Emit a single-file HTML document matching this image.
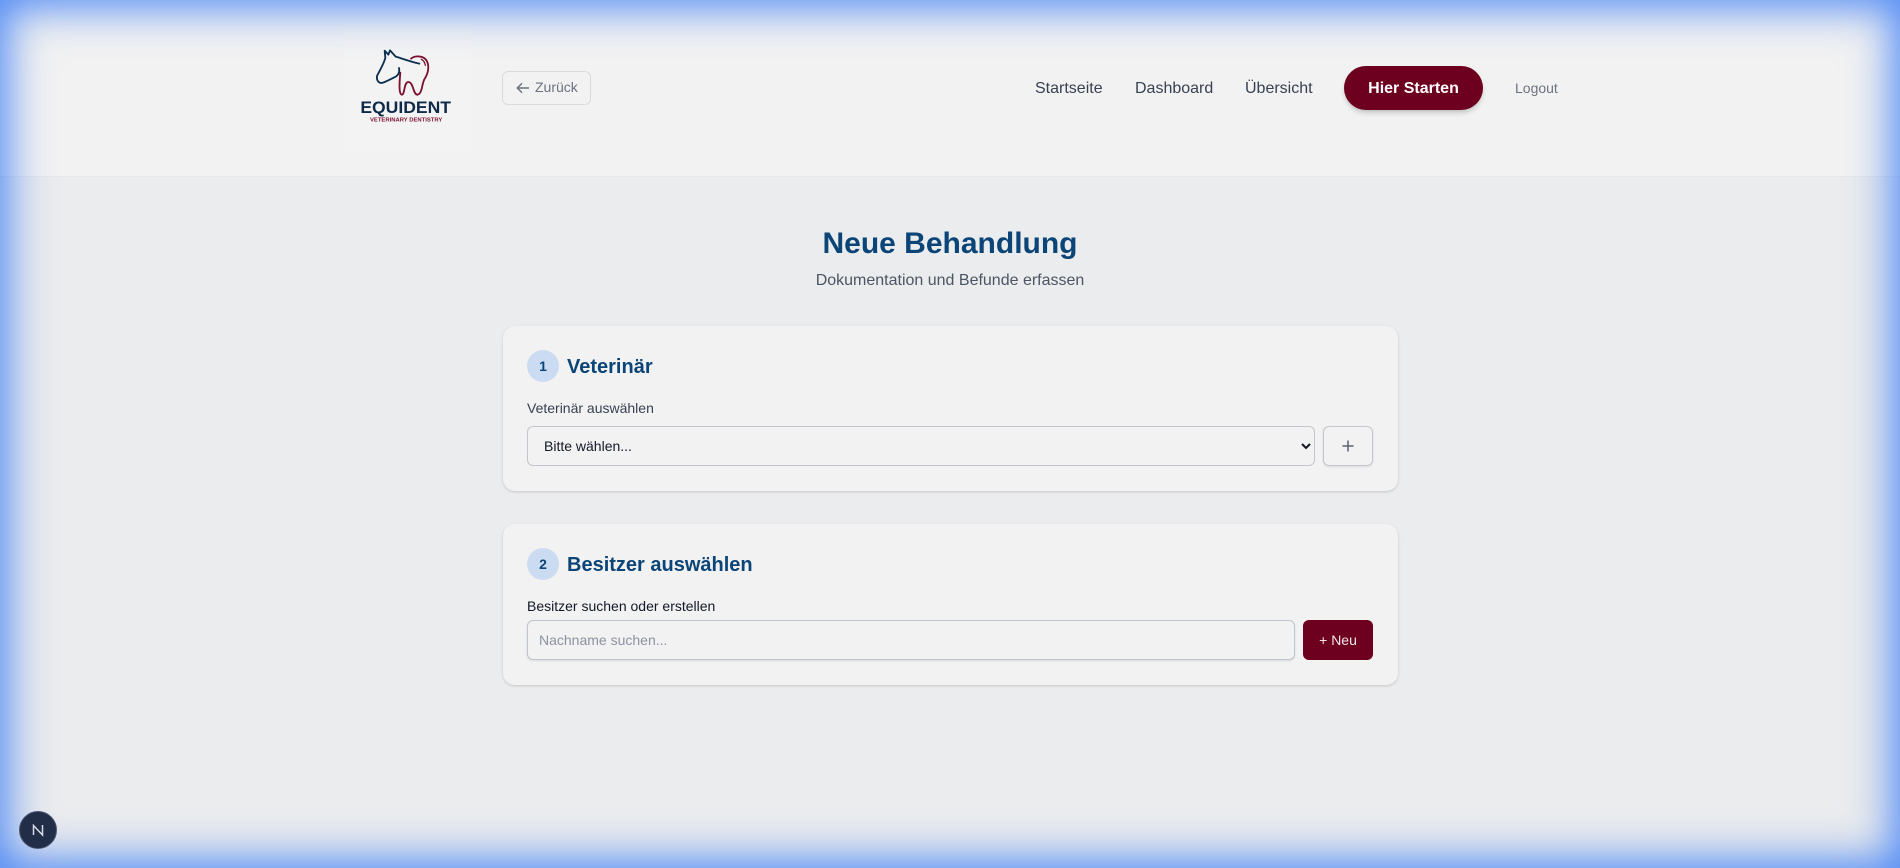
<!DOCTYPE html>
<html lang="de"><head><meta charset="utf-8"><title>Neue Behandlung</title>
<style>
*{box-sizing:border-box;margin:0;padding:0}
html,body{width:1900px;height:868px;overflow:hidden}
body{background:#ebecee;font-family:"Liberation Sans",sans-serif;position:relative;color:#111827}
.abs{position:absolute}
header{position:absolute;left:0;top:0;width:1900px;height:177px;background:#f2f2f2;border-bottom:1px solid #e5e6e9}
.logo{position:absolute;left:343px;top:24px;width:128px;height:128px;background:#f3f3f3}
.back{position:absolute;left:502px;top:71px;width:89px;height:34px;border:1px solid #d8dade;border-radius:6px;font-size:14px;line-height:31px;color:#6b7280;padding-left:32px}
.nav{position:absolute;top:79px;font-size:16px;line-height:20px;color:#374151}
.cta{position:absolute;left:1344px;top:66px;width:139px;height:44px;border-radius:22px;background:#6d001f;color:#fff;font-weight:700;font-size:16px;line-height:45px;text-align:center;box-shadow:0 4px 6px -1px rgba(0,0,0,.16),0 2px 4px -2px rgba(0,0,0,.12)}
h1{position:absolute;left:0;width:1900px;top:226px;text-align:center;font-size:30px;line-height:36px;color:#0b4477;font-weight:700}
.sub{position:absolute;left:0;width:1900px;top:269px;text-align:center;font-size:16px;line-height:24px;color:#4b5563}
.card{position:absolute;left:503px;width:894.5px;background:#f2f2f2;border-radius:12px;box-shadow:0 1px 3px rgba(0,0,0,.1),0 1px 2px rgba(0,0,0,.06)}
.num{position:absolute;left:24px;width:32px;height:32px;border-radius:50%;background:#cbdcf2;color:#0b4477;font-weight:700;font-size:14px;line-height:32px;text-align:center}
h2{position:absolute;left:64px;font-size:20px;line-height:28px;font-weight:700;color:#0b4477}
label{position:absolute;left:24px;font-size:14px;line-height:20px}
select,input{font-family:"Liberation Sans",sans-serif;font-size:14px;outline:0}
select{position:absolute;left:24px;top:100px;width:788px;height:40px;border:1px solid #c3c6cc;border-radius:6px;background:#f2f2f2;padding:0 12px;color:#111827}
input{position:absolute;left:24px;top:96px;width:768px;height:40px;border:1px solid #bfc5cf;border-radius:6px;background:#f2f2f2;padding:0 11px;box-shadow:0 1px 2px rgba(0,0,0,.1)}
input::placeholder{color:#8b92a0;opacity:1}
.plus{position:absolute;left:820px;top:100px;width:50px;height:40px;border:1px solid #c3c6cc;border-radius:6px;background:#f2f2f2;box-shadow:0 1px 2px rgba(0,0,0,.1)}
.neu{position:absolute;left:800px;top:96px;width:70px;height:40px;border-radius:6px;background:#6d001f;color:#f3e4e8;font-size:14px;line-height:40px;text-align:center}
.devtool{position:absolute;left:19px;top:811px;width:38px;height:38px;border-radius:50%;background:#222d47;border:1px solid #4a566e;z-index:3}
.glow{position:absolute;inset:0;pointer-events:none;z-index:2;box-shadow:inset 0 0 40px 6px rgba(59,125,246,.85),inset 0 0 60px rgba(59,125,246,.22)}
</style></head><body>
<header></header>
<div class="logo"></div>
<svg class="abs" style="left:355px;top:40px" width="110" height="90" viewBox="0 0 330 270">
<path d="M168 56C180 46 205 46 215 62C224 78 220 100 208 118C200 134 202 160 188 164C174 166 176 126 160 126C146 126 150 166 140 164C130 160 134 120 136 98" fill="none" stroke="#7c1230" stroke-width="5.5" stroke-linecap="round"/>
<path d="M199 58C206 62 210 68 211 76" fill="none" stroke="#7c1230" stroke-width="4" stroke-linecap="round"/>
<path d="M193 71C170 66 140 55 122 50L105 31L100 44L89 32L91 54C84 78 72 94 66 108C64 122 72 132 84 128C96 124 110 116 122 110C132 104 134 94 132 84" fill="none" stroke="#0e2f4f" stroke-width="5.5" stroke-linejoin="round" stroke-linecap="round"/>
<text x="16" y="219" font-family="Liberation Sans" font-weight="700" font-size="49" fill="#0e2a47" textLength="272" lengthAdjust="spacingAndGlyphs">EQUIDENT</text>
<text x="45" y="244" font-family="Liberation Sans" font-weight="700" font-size="15" fill="#7c1230" textLength="217" lengthAdjust="spacingAndGlyphs">VETERINARY DENTISTRY</text>
</svg>
<div class="back">Zurück</div>
<svg class="abs" style="left:514.5px;top:79.5px" width="16" height="16" viewBox="0 0 16 16"><path d="M14 8H2.5M7 3.2 2.3 8 7 12.8" fill="none" stroke="#6b7280" stroke-width="1.4"/></svg>
<div class="nav" style="left:1035px">Startseite</div>
<div class="nav" style="left:1135px">Dashboard</div>
<div class="nav" style="left:1245px">Übersicht</div>
<div class="cta">Hier Starten</div>
<div class="nav" style="left:1515px;top:78px;font-size:14px;color:#6b7280">Logout</div>
<h1>Neue Behandlung</h1>
<div class="sub">Dokumentation und Befunde erfassen</div>
<div class="card" style="top:326px;height:165px">
<div class="num" style="top:24px">1</div><h2 style="top:27px">Veterinär</h2>
<label style="top:72px;color:#374151">Veterinär auswählen</label>
<select><option>Bitte wählen...</option></select>
<div class="plus"></div>
<svg class="abs" style="left:837px;top:112px" width="16" height="16" viewBox="0 0 16 16"><path d="M8 2.5v11M2.5 8h11" stroke="#5b6270" stroke-width="1.5"/></svg>
</div>
<div class="card" style="top:524px;height:161px">
<div class="num" style="top:24px">2</div><h2 style="top:27px">Besitzer auswählen</h2>
<label style="top:72px;color:#111827">Besitzer suchen oder erstellen</label>
<input placeholder="Nachname suchen...">
<div class="neu">+ Neu</div>
</div>
<div class="devtool"><svg class="abs" style="left:10px;top:10px" width="16" height="16" viewBox="0 0 16 16"><path d="M3.5 13V3.5L12.5 13V3" fill="none" stroke="#d5dbe6" stroke-width="1.5"/></svg></div>
<div class="glow"></div>
</body></html>
